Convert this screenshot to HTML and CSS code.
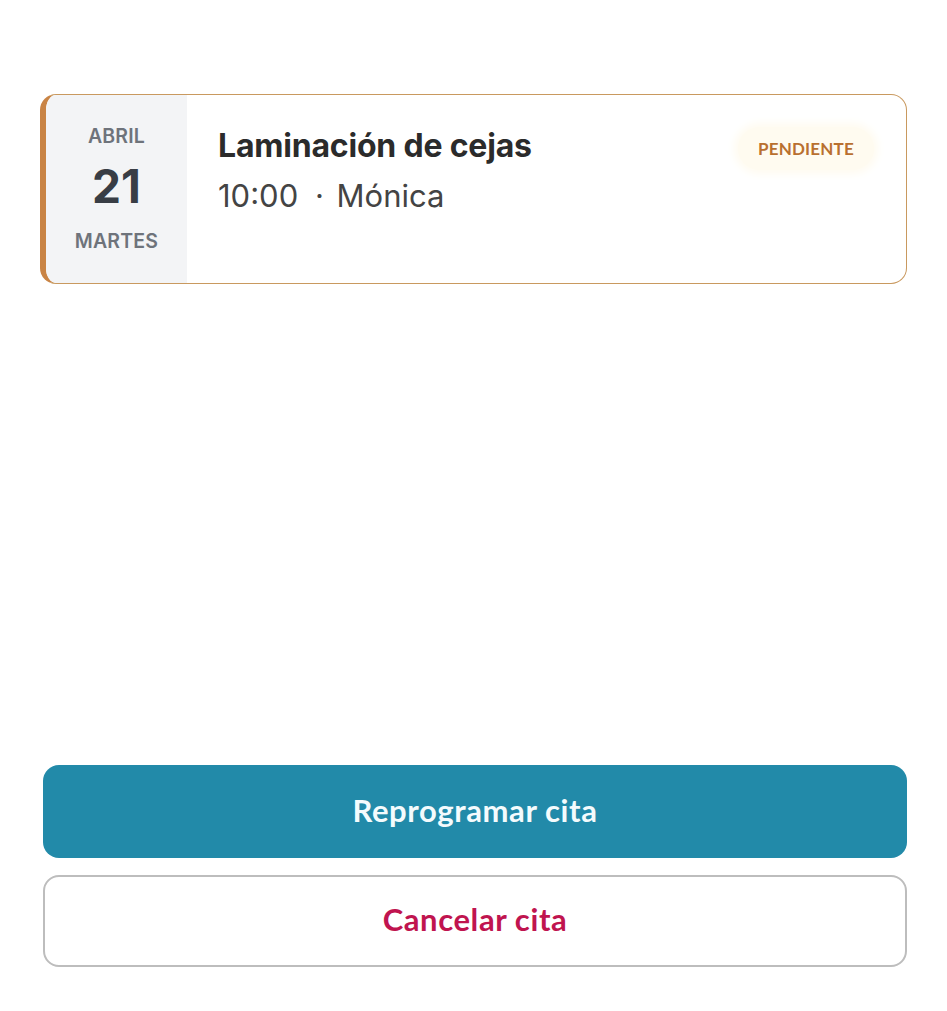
FILE: index.html
```html
<!DOCTYPE html>
<html lang="es">
<head>
<meta charset="utf-8">
<link rel="stylesheet" href="styles.css">
</head>
<body>
<main class="page">
  <article class="card">
    <div class="date">
      <span class="month">ABRIL</span>
      <span class="day">21</span>
      <span class="weekday">MARTES</span>
    </div>
    <div class="info">
      <div class="text">
        <h2 class="title">Laminación de cejas</h2>
        <p class="meta">10:00 <span class="dot">·</span> Mónica</p>
      </div>
      <span class="badge">PENDIENTE</span>
    </div>
  </article>
  <div class="spacer"></div>
  <div class="actions">
    <button class="btn btn-primary">Reprogramar cita</button>
    <button class="btn btn-outline">Cancelar cita</button>
  </div>
</main>
</body>
</html>
```

FILE: styles.css
```css
* { box-sizing: border-box; }
html, body { margin: 0; padding: 0; background: #ffffff; }
body { width: 947px; height: 1011px; font-family: Inter, "Noto Sans", sans-serif; }

.page {
  display: flex;
  flex-direction: column;
  height: 1011px;
  padding: 94px 40px 44px 40px;
}

.card {
  display: flex;
  min-height: 190px;
  border: 1px solid #c9995f;
  border-left: 6px solid #c98445;
  border-radius: 16px;
  overflow: hidden;
  background: #fff;
}

.date {
  width: 141px;
  flex: none;
  background: #f3f4f6;
  display: flex;
  flex-direction: column;
  align-items: center;
  justify-content: center;
  padding-bottom: 2px;
}
.month, .weekday {
  font-size: 19.5px;
  font-weight: 600;
  color: #6e737b;
  letter-spacing: 0.2px;
  line-height: 24px;
}
.day {
  font-size: 46px;
  font-weight: 700;
  color: #383d45;
  line-height: 1;
  margin: 15px 0 20px;
}

.info {
  flex: 1;
  display: flex;
  justify-content: space-between;
  align-items: flex-start;
  padding: 31px 32px 0 31px;
}
.title {
  margin: 0;
  font-size: 32px;
  font-weight: 700;
  color: #2b2b2b;
  line-height: 40px;
  letter-spacing: -0.2px;
}
.meta {
  margin: 12px 0 0;
  font-size: 31px;
  font-weight: 400;
  color: #444;
  line-height: 36px;
}
.dot { margin: 0 4px 0 8px; }

.badge {
  font-family: Lato, "Noto Sans", sans-serif;
  font-size: 17px;
  font-weight: 700;
  color: #b9702f;
  background: #fffbf0;
  border-radius: 999px;
  padding: 11px 20px;
  margin-top: 1px;
  box-shadow: 0 0 8px 4px #fffbf0;
  letter-spacing: 0.2px;
}

.spacer { flex: 1; }

.actions {
  display: flex;
  flex-direction: column;
  gap: 17px;
  padding-left: 3px;
}
.btn {
  height: 93px;
  border-radius: 16px;
  font-family: Lato, "Noto Sans", sans-serif;
  font-size: 31px;
  font-weight: 700;
  letter-spacing: 0.6px;
  cursor: pointer;
  padding: 0 0 4px;
}
.btn-primary {
  background: #228aa9;
  color: #f4fbfd;
  border: none;
}
.btn-outline {
  height: 92px;
  background: #fff;
  color: #c0144f;
  border: 2px solid #bdbdbd;
}
```
